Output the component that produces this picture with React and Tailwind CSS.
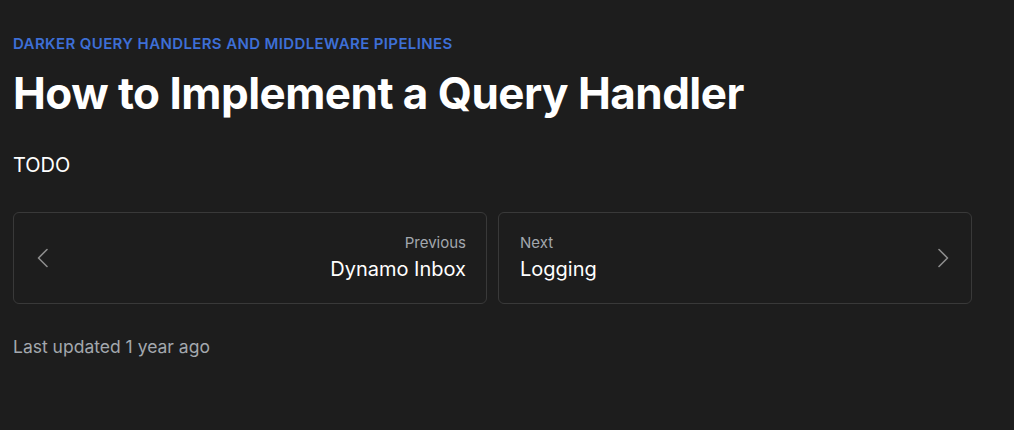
import React from 'react';

function Chevron({ dir }) {
  return (
    <svg viewBox="0 0 24 24" fill="none" stroke="currentColor" strokeWidth={1.6} strokeLinecap="round" strokeLinejoin="round" className="w-6 h-6 shrink-0 text-[#8c8c8c]">
      {dir === 'left' ? <path d="M16 3.5L7.5 12l8.5 8.5" /> : <path d="M8 3.5l8.5 8.5L8 20.5" />}
    </svg>
  );
}

function PageLink({ label, title, dir }) {
  const isPrev = dir === 'left';
  return (
    <a
      href="#"
      className={`flex-1 flex items-center h-[92px] rounded-md border border-[#393939] gap-4 ${isPrev ? 'flex-row pl-[17px] pr-[20px]' : 'flex-row-reverse pl-[21px] pr-[16px]'}`}
    >
      <Chevron dir={dir} />
      <div className={`flex-1 flex flex-col ${isPrev ? 'items-end' : 'items-start'}`}>
        <span className="text-[15px] leading-5 text-[#a3a8ae]">{label}</span>
        <span className="mt-[2px] text-[20px] leading-7 text-white">{title}</span>
      </div>
    </a>
  );
}

export default function App() {
  return (
    <div className="min-h-[430px] bg-[#1d1d1d] font-['Inter',sans-serif] px-[13px] pt-[34px]">
      <div className="w-[959px]">
        <p className="text-[15px] leading-5 font-semibold tracking-[0.025em] text-[#3d6fd6]">
          DARKER QUERY HANDLERS AND MIDDLEWARE PIPELINES
        </p>
        <h1 className="mt-[11px] text-[44px] leading-[56px] font-bold tracking-[-0.012em] text-white">
          How to Implement a Query Handler
        </h1>
        <p className="mt-[30px] text-[20px] leading-7 text-white">TODO</p>
        <div className="mt-[33px] flex gap-[11px]">
          <PageLink label="Previous" title="Dynamo Inbox" dir="left" />
          <PageLink label="Next" title="Logging" dir="right" />
        </div>
        <p className="mt-[31px] text-[17.5px] leading-6 text-[#a3a8ae]">Last updated 1 year ago</p>
      </div>
    </div>
  );
}
